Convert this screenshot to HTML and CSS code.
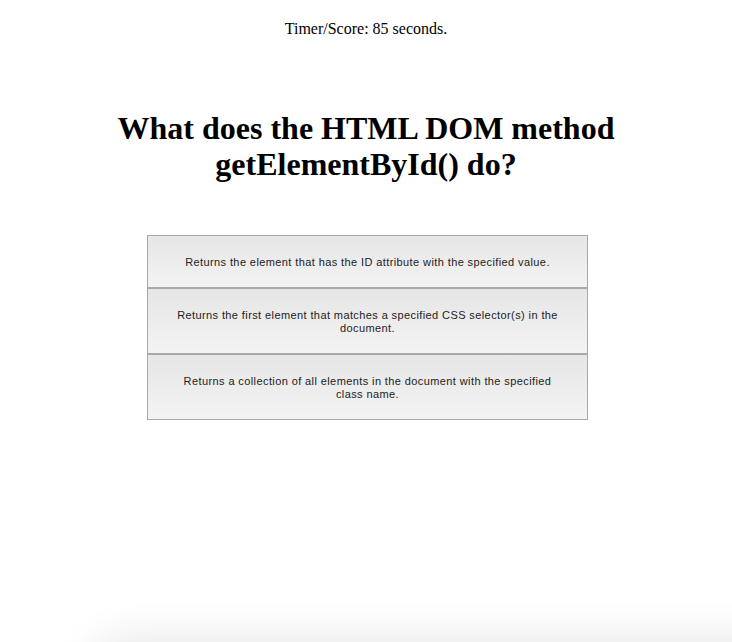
FILE: index.html
```html
<!DOCTYPE html>
<html>
<head>
<meta charset="utf-8">
<title>Quiz</title>
<link rel="stylesheet" href="styles.css">
</head>
<body>
<div class="page">
  <div class="timer">Timer/Score: 85 seconds.</div>
  <h1 class="question">What does the HTML DOM method getElementById() do?</h1>
  <div class="choices">
    <button class="choice">Returns the element that has the ID attribute with the specified value.</button>
    <button class="choice">Returns the first element that matches a specified CSS selector(s) in the document.</button>
    <button class="choice">Returns a collection of all elements in the document with the specified class name.</button>
  </div>
</div>
<div class="shade"></div>
</body>
</html>
```
FILE: styles.css
```css
html, body {
  margin: 0;
  padding: 0;
  background: #ffffff;
}
body {
  font-family: "Liberation Serif", "Times New Roman", serif;
  color: #000;
  height: 642px;
  overflow: hidden;
}
.page {
  display: flex;
  flex-direction: column;
  align-items: center;
  padding-top: 20px;
}
.timer {
  font-size: 16px;
  line-height: 18px;
  text-align: center;
}
.question {
  margin: 72px 0 0;
  width: 520px;
  font-size: 32px;
  line-height: 36px;
  font-weight: bold;
  text-align: center;
}
.choices {
  margin-top: 53px;
  width: 441px;
  margin-left: 3px;
  display: flex;
  flex-direction: column;
}
.choice {
  display: block;
  width: 100%;
  margin: 0;
  padding: 20px 28px 18px;
  border: 1px solid #a9a9a9;
  background: linear-gradient(#e6e6e6, #f3f3f3);
  font-family: "Liberation Sans", Arial, sans-serif;
  font-size: 11px;
  line-height: 13px;
  letter-spacing: 0.4px;
  color: #222;
  text-align: center;
  cursor: pointer;
}
.shade {
  position: fixed;
  left: 90px;
  right: -60px;
  top: 642px;
  height: 40px;
  border-radius: 40px 0 0 0;
  box-shadow: 0 0 40px 6px rgba(0, 0, 0, 0.09);
  pointer-events: none;
}
```
